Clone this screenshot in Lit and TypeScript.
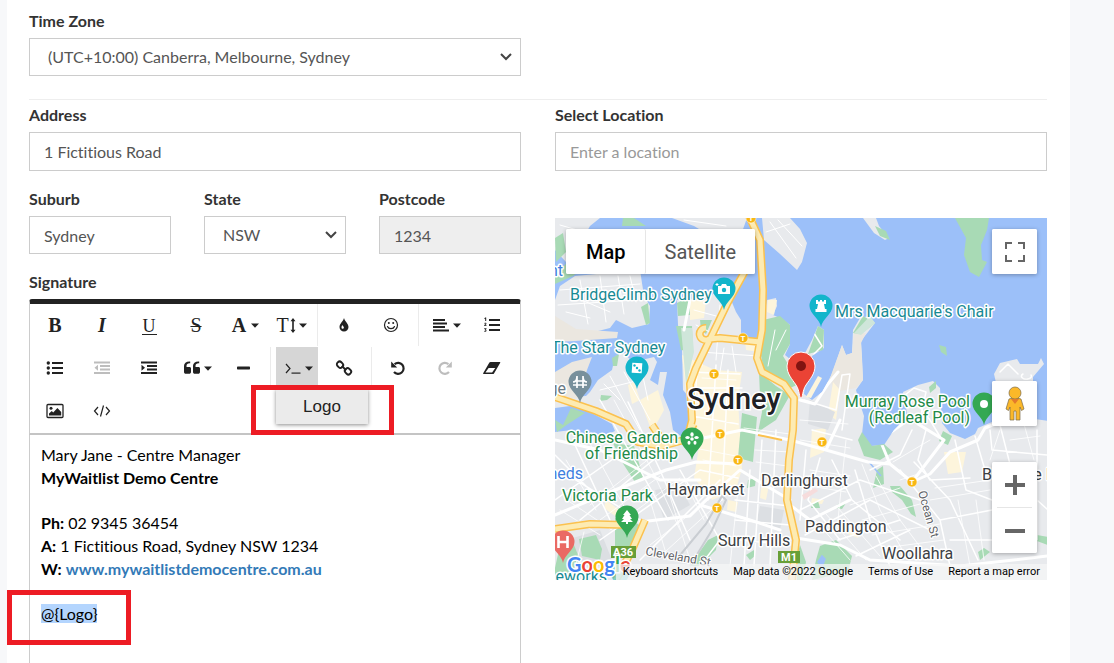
import { LitElement, html, svg, css, TemplateResult, SVGTemplateResult } from "lit";
import { customElement, property } from "lit/decorators.js";

const caret = html`<svg class="caret" width="8" height="5" viewBox="0 0 8 5" aria-hidden="true"><path d="M0 .5h8L4 4.800z" fill="currentColor"/></svg>`;

const icon = (body: SVGTemplateResult, w = 18) =>
  html`<svg class="ico" width=${w} height="18" viewBox="0 0 ${w} 18" fill="currentColor" aria-hidden="true">${body}</svg>`;

const icons: Record<string, TemplateResult> = {
  bold: html`<span class="glyph heavy">B</span>`,
  italic: html`<span class="glyph heavy slant">I</span>`,
  underline: html`<span class="glyph"><span class="under">U</span></span>`,
  strike: html`<span class="glyph struck">S</span>`,
  font: html`<span class="glyph heavy">A</span>`,
  size: html`<span class="glyph pair">T<svg width="6" height="15" viewBox="0 0 6 15" aria-hidden="true"><path d="M3 0l2.500 3.300H3.800v8.400h1.700L3 15 .5 11.700h1.700V3.300H.5z" fill="currentColor"/></svg></span>`,
  drop: icon(svg`<path d="M9 2C8.500 5 4.500 7.500 4.500 11a4.500 4.500 0 0 0 9 0C13.500 7.500 9.500 5 9 2z"/><path d="M6.500 11.200c0-.9.4-1.500.9-2.100.3 1 1.500 1.500 1.500 2.700a1.200 1.200 0 0 1-2.400-.6z" fill="#fff"/>`),
  smile: icon(svg`<circle cx="9" cy="9" r="6.500" fill="none" stroke="currentColor" stroke-width="1.200"/><circle cx="6.800" cy="7" r="1"/><circle cx="11.200" cy="7" r="1"/><path d="M5.500 10.500c1 2.800 6 2.800 7 0" fill="none" stroke="currentColor" stroke-width="1.200" stroke-linecap="round"/>`),
  align: icon(svg`<path d="M1 3h12v2H1zM1 6.500h14v2H1zM1 10h12v2H1zM1 13.500h16v2H1z"/>`),
  ordered: icon(svg`<path d="M6 3h11v2H6zM6 8h11v2H6zM6 13h11v2H6z"/><path d="M2.200 1.500h1V5h-1V2.800l-.8.200v-.8zM1.300 7.200c.8-.9 2.500-.4 2.100.7-.2.500-.9.900-1.200 1.400h1.300v.8H1.100c0-1.500 1.400-1.700 1.400-2.300 0-.4-.6-.3-.8.100zM1.200 12.300h2.300v.7l-.8.800c1.400.2 1 2-.4 2-.5 0-.9-.1-1.200-.4l.4-.7c.4.300 1.100.3 1.100-.1s-.5-.4-.9-.4v-.5l.6-.6H1.200z"/>`),
  bullets: icon(svg`<circle cx="2.300" cy="4" r="1.700"/><circle cx="2.300" cy="9" r="1.700"/><circle cx="2.300" cy="14" r="1.700"/><path d="M6 3h11v2H6zM6 8h11v2H6zM6 13h11v2H6z"/>`),
  outdent: icon(svg`<path d="M1 2.500h16v2H1zM7 6h10v2H7zM7 9.500h10v2H7zM1 13h16v2H1zM5 5.700v6L1.500 8.700z"/>`),
  indent: icon(svg`<path d="M1 2.500h16v2H1zM7 6h10v2H7zM7 9.500h10v2H7zM1 13h16v2H1zM1.500 5.700v6L5 8.700z"/>`),
  quote: icon(svg`<path d="M8 9.500v3.400c0 1-.8 1.800-1.800 1.800H2.800c-1 0-1.800-.8-1.800-1.800V7c0-2.700 2-4.500 5.600-4.500h.6v1.800h-.6C4.600 4.300 3.500 5.200 3.500 7v.5c0 .4.200.5.600.5h2.100C7.400 8 8 8.500 8 9.500zM17 9.500v3.400c0 1-.8 1.800-1.800 1.800h-3.400c-1 0-1.800-.8-1.800-1.800V7c0-2.700 2-4.500 5.600-4.500h.6v1.800h-.6c-2 0-3.100.9-3.100 2.700v.5c0 .4.200.5.600.5h2.100c1.200 0 1.800.5 1.800 1.500z"/>`),
  minus: icon(svg`<rect x="3" y="7.500" width="13" height="3" rx=".7"/>`),
  terminal: icon(svg`<path d="M2 5l4 4.500-4 4.500" fill="none" stroke="currentColor" stroke-width="1.200"/><path d="M7.500 13.500h9v1.200h-9z"/>`),
  link: icon(svg`<g fill="none" stroke="currentColor" stroke-width="1.900"><rect x="1.800" y="3" width="6.400" height="5.400" rx="2.400" transform="rotate(45 5 5.700)"/><rect x="9.800" y="9.600" width="6.400" height="5.400" rx="2.400" transform="rotate(45 13 12.300)"/><path d="M6.800 7l4.400 4.200"/></g>`),
  undo: icon(svg`<path d="M5.600 5.100A5.500 5.500 0 1 1 5 13" fill="none" stroke="currentColor" stroke-width="2.200"/><path d="M2.200 2.500v6h6z"/>`),
  redo: icon(svg`<path d="M12.400 5.100A5.500 5.500 0 1 0 13 13" fill="none" stroke="currentColor" stroke-width="2.200"/><path d="M15.800 2.500v6h-6z"/>`),
  eraser: icon(svg`<path d="M7.500 3h9c.8 0 1 .5.600 1.100L11 14.400c-.3.400-.6.600-1.100.6h-9c-.8 0-1-.5-.6-1.100L6.400 3.600c.3-.4.600-.6 1.100-.6zm-1.900 6L2.400 13.600h6.700L12.300 9z"/>`),
  image: icon(svg`<rect x="1" y="2.500" width="16" height="13" rx="1" fill="none" stroke="currentColor" stroke-width="1.300"/><circle cx="5" cy="6.200" r="1.500"/><path d="M3 13.500v-2L5.800 9l1.400 1.400L11.400 6l3.800 4v3.500z"/>`),
  code: icon(svg`<path d="M5 5L1.500 9 5 13M13 5l3.500 4-3.500 4M10.500 3.500l-3 11" fill="none" stroke="currentColor" stroke-width="1.200"/>`),
};

type Tool = { icon: string; label: string; menu?: boolean; off?: boolean; active?: boolean };
const t = (icon: string, label: string, extra: Partial<Tool> = {}): Tool => ({ icon, label, ...extra });

const toolRows: Tool[][][] = [
  [
    [t("bold", "Bold"), t("italic", "Italic"), t("underline", "Underline"), t("strike", "Strikethrough"), t("font", "Font family", { menu: true }), t("size", "Font size", { menu: true })],
    [t("drop", "Colors"), t("smile", "Emoticons")],
    [t("align", "Align", { menu: true }), t("ordered", "Ordered list")],
  ],
  [
    [t("bullets", "Unordered list"), t("outdent", "Decrease indent", { off: true }), t("indent", "Increase indent"), t("quote", "Quote", { menu: true }), t("minus", "Horizontal line")],
    [t("terminal", "Placeholders", { menu: true, active: true }), t("link", "Insert link")],
    [t("undo", "Undo"), t("redo", "Redo", { off: true }), t("eraser", "Clear formatting")],
  ],
  [[t("image", "Insert image"), t("code", "Code view")]],
];

@customElement("signature-editor")
export class SignatureEditor extends LitElement {
  static styles = css`
    :host { display: flex; flex-direction: column; color: #222; }
    .toolbar { border: 1px solid #ccc; border-top: 5px solid #222; border-bottom: 2px solid #c4c4c4; border-radius: 3px 3px 0 0; padding: 0 4px 1px; display: flex; flex-direction: column; gap: 1px; }
    .row { display: flex; gap: 5px; }
    .group { display: flex; gap: 5px; }
    .group + .group { border-left: 1px solid #ebebeb; margin-left: 1px; padding-left: 5px; }
    .slot { position: relative; }
    button { font: inherit; color: inherit; border: 0; background: none; padding: 0; cursor: pointer; }
    .tool { width: 42px; height: 42px; display: flex; align-items: center; justify-content: center; gap: 3px; }
    .tool.with-menu { padding-left: 3px; }
    .tool.active { background: #d6d6d6; }
    .tool.off { color: #bdbdbd; }
    .ico, .caret { flex: none; overflow: visible; }
    .glyph { font: 20px/20px "Liberation Serif", serif; min-width: 18px; text-align: center; }
    .heavy { font-weight: 700; }
    .slant { font-style: italic; }
    .struck { text-decoration: line-through 1px; }
    .under { display: inline-block; font-size: 18px; line-height: 15px; border-bottom: 1px solid #222; padding: 0 1px; }
    .pair { display: flex; align-items: center; gap: 1px; }
    .menu { position: absolute; z-index: 2; top: 42px; left: 0; width: 92px; height: 35px; background: #ebebeb; box-shadow: 0 1px 4px rgba(0, 0, 0, 0.45); font: 17px/34px "Liberation Sans", Arial, sans-serif; text-align: center; }
    .mark { position: absolute; z-index: 3; box-sizing: border-box; border: 5px solid #ed1c24; pointer-events: none; }
    .mark.menu-mark { top: 38px; left: -25px; width: 143px; height: 50px; }
    .mark.token-mark { top: -12px; left: -34px; width: 124px; height: 55px; }
    .body { flex: 1; border: solid #ccc; border-width: 0 1px; padding: 8px 11px 0; color: #000; line-height: 23px; outline: none; }
    .blank { height: 22px; }
    .line { position: relative; }
    .body a { color: #337ab7; text-decoration: none; font-weight: 700; }
    .token { background: #b4d5fe; }
  `;
  render() {
    return html`
      <div class="toolbar" role="toolbar" aria-label="Formatting">
        ${toolRows.map((row) => html`<div class="row">${row.map((group) => html`<div class="group">${group.map((tool) => html`
          <div class="slot">
            <button type="button" class="tool ${tool.menu ? "with-menu" : ""} ${tool.active ? "active" : ""} ${tool.off ? "off" : ""}" aria-label=${tool.label}>${icons[tool.icon]}${tool.menu ? caret : ""}</button>
            ${tool.active ? html`<button type="button" class="menu">Logo</button><div class="mark menu-mark"></div>` : ""}
          </div>`)}</div>`)}</div>`)}
      </div>
      <div class="body" role="textbox" aria-multiline="true" aria-label="Signature" contenteditable="true">
        <div class="line">Mary Jane - Centre Manager</div>
        <div class="line"><b>MyWaitlist Demo Centre</b></div>
        <div class="blank"></div>
        <div class="line"><b>Ph:</b> 02 9345 36454</div>
        <div class="line"><b>A:</b> 1 Fictitious Road, Sydney NSW 1234</div>
        <div class="line"><b>W:</b> <a href="#site">www.mywaitlistdemocentre.com.au</a></div>
        <div class="blank"></div>
        <div class="line"><span class="token">@{Logo}</span><div class="mark token-mark"></div></div>
      </div>`;
  }
}

const landShapes = [
  "M555 218H600L590 226 582 240 566 262 555 250Z",
  "M555 300L560 286 575 276 640 270 644 296 650 306 649 324 632 328 616 320 610 328 598 331 555 333Z",
  "M672 218H747L742 232H704L694 226Z",
  "M762 218H790L800 229 807 243 802 262 797 270 780 254 764 240Z",
  "M863 218H876L879 226 889 238 885 240 874 233Z",
  "M994 374L1000 363 1017 359 1020 364 1038 364 1041 358 1044 364 1033 377 1033 400H1000Z",
  "M555 398L586 396 590 392 598 380 612 370 615 357 622 352 633 362 654 357 657 362 650 380 658 385 660 372 667 372 663 395 670 412 673 430 682 437 688 428 688 396 683 390 682 350 678 325 677 300 689 297 697 305 722 288 731 300 736 312 741 320 741 338 760 338 763 320 767 300 776 298 777 306 773 315 782 319 790 325 790 344 785 355 796 364 805 353 812 340 818 326 824 330 824 348 812 356 806 374 804 394 812 400 822 392 832 374 842 345 846 355 852 353 853 330 860 318 869 316 875 323 861 341 862 357 863 380 856 390 860 404 864 416 862 434 871 446 884 445 894 430 900 424 908 418 903 392 918 385 933 381 940 388 942 423 950 433 965 439 975 434 978 428 992 422 1014 416 1048 421V580H555Z",
];

const parkShapes = [
  "M555 238L563 233 566 252 556 262Z", "M623 218H634L646 226H622Z", "M568 262H590L573 276 555 284V274Z",
  "M641 307L648 303 650 323 646 325Z", "M677 303L689 297 690 315 678 316Z", "M676 326L692 326 693 352 681 350Z",
  "M700 320H712L706 334 701 330Z", "M955 218H989L987 230 981 245 982 260 987 262 979 277 970 272 964 255 966 238Z",
  "M875 226L886 231 890 240 880 236Z", "M763 320L780 316 790 325 790 344 783 356 793 372 797 385 790 388 764 371 760 350Z",
  "M759 372L776 386 790 395 776 420 758 432 762 412 760 396Z", "M742 413L757 417 753 462 738 458Z",
  "M818 326L824 330 823 350 808 354Z", "M853 333L863 316 875 323 861 334Z", "M939 345L946 347 947 356 941 352Z",
  "M929 387L936 381 936 388 930 393Z", "M862 432L872 446 884 444 893 452 880 460 864 456 858 440Z",
  "M877 470L883 466 884 484 873 488Z", "M943 431L952 436 948 445 939 441Z", "M890 486L900 486 912 500 916 517 911 514 902 500 892 492Z",
  "M555 424L562 418 570 408 582 412 567 425 556 430Z", "M613 443L634 446 643 477 635 482 622 462Z",
  "M555 568L560 545 572 540 580 560 566 580H555Z", "M579 539L596 535 602 549 600 560 582 556Z",
  "M615 518L632 520 642 527 632 556 615 556Z", "M694 560L708 540 718 535 716 550 700 566 690 566Z",
  "M748 480L756 478 755 486 747 488Z", "M746 555L754 550 755 556 750 560Z", "M797 556L800 545 806 562 803 580 797 580Z",
  "M820 546L836 540 852 556 848 572 812 580 816 560Z", "M811 508H820L818 501 812 505Z", "M838 504L846 503 842 509 836 508Z",
  "M978 552L984 548 990 552 980 560Z", "M1037 535L1048 537V545L1037 541Z", "M612 358L619 354 617 366 613 366Z", "M601 395L612 396 607 400 600 401Z",
];

const sandShapes = [
  "M555 316L576 329 618 332 617 338 575 341 555 342Z", "M555 372L572 362 592 357 587 370 578 398 555 400Z",
  "M842 345L846 355 852 353 854 333H866L861 343 863 380 856 388 834 392 830 378Z",
];

const creamShapes = [
  "M682 355L715 370 742 372 738 400 742 468 736 490 712 500 694 478 700 440 690 430Z",
  "M690 300H706L704 318 690 320Z", "M640 400L658 390 664 410 652 432Z", "M768 300L777 300 774 315 767 312Z",
  "M944 452H966L962 472 948 474Z", "M812 430L826 428 824 452 810 458Z", "M822 378L818 376 806 397 811 398Z",
  "M628 385L634 382 640 400 632 404Z", "M745 340L760 342 759 352 746 350Z", "M833 382L840 390 836 420 828 414Z",
  "M762 480H770L766 500 760 498Z", "M728 500L738 502 736 512 727 510Z", "M606 500L622 512 618 518 604 508Z",
  "M812 498L824 500 822 504 811 503Z", "M850 528L860 532 858 538 848 534Z",
];

const minorRoads = `M690 372L740 374M690 388L742 388M692 416L738 424M700 470L738 478M698 360L692 440M716 365L708 500M728 370L722 500
M600 400L640 470 668 520M628 402L660 470 690 540M575 445L610 520M560 470L640 520M555 455L600 500M555 500L640 440M580 520L690 430
M600 540L700 470M640 560L720 480M680 470L720 540 700 566M750 470L744 566M762 440L754 566M776 430L770 566M735 500L790 506M735 520L790 525M740 540L790 545
M804 400L836 410 842 375 850 374 842 430M812 430L852 440M806 450L800 520M820 458L808 500 840 540M832 460L852 500 900 540M855 470L870 520 890 566
M800 510L860 480 920 500M805 535L870 500 930 530M900 470L940 520 950 566M914 462L950 500 978 560M926 430L918 460 930 480 970 478M942 440L930 420 918 405
M955 440L966 490 992 500M975 436L985 470M990 430L992 450 1048 455M1000 425L1014 480M1037 430L1037 540M940 520L992 510M950 540L992 540M905 395L914 388 926 392 920 420
M838 540L900 520M856 556L910 530M870 470L900 455 912 430M1037 500L1048 510M1000 372L1008 364 1018 374M1023 374a5 3 0 1 0 8 1M812 330L822 346 814 354`;

const laneRoads = `M614 400L652 470 680 530M588 440L626 510M566 460L596 510M590 505L650 458M600 520L660 476M610 530L680 478M650 545L716 494M665 552L722 500
M650 500L668 560M668 490L690 560M684 480L704 520M738 490L730 566M744 428L790 434M755 450L790 452M756 462L788 466M800 420L848 424M800 440L850 448
M846 440L838 520M862 464L880 510 908 560M876 476L900 520 930 560M810 470L850 476M804 485L846 492M815 520L850 560M826 514L866 560M838 508L880 556
M850 505L900 488M862 520L920 504M872 535L940 524M884 548L944 540M930 500L990 490M935 488L990 480M958 500L970 566M1000 430L990 460M976 500L984 560
M893 462L930 440M900 480L918 474M560 510L600 535M570 502L612 530M584 532L572 580M1024 424L1034 460M1010 440L1040 436M702 378L736 380M694 402L740 406M694 448L736 456M703 460L736 466`;

const faintRoads = `M560 290L640 284M558 305L636 300M580 280L588 324M600 276L606 322M618 276L624 314M566 378L584 364M600 390L640 380M610 376L640 430M624 372L650 420
M694 310L716 316M696 325L714 334M720 305L716 360M770 222L796 258M778 220L802 246M766 232L790 224M684 220L726 226M560 225L584 232M775 330L768 366M786 330L776 350
M566 312L590 318M572 296L610 312M630 276L636 302M704 340L702 366M724 348L720 372M732 346L736 372M700 352L758 356M642 372L648 400M604 384L620 400`;

const majorRoads = `M555 515L610 492 666 470 696 462 740 464M694 440L742 430 790 440 826 450 868 462 890 464 912 482 930 474 950 452 978 440 985 428 1000 422
M640 522L690 516 706 500 740 470 790 500M790 505L810 520 850 500M796 538L840 545 870 560 960 566 1048 556M912 482L944 440 918 424M890 464L880 440 908 420
M700 505L750 520 780 530M826 450L840 420M555 440L600 450 660 480 700 480M684 330L690 300M800 400L815 404 828 384 838 372`;

const expressways = `M748 214L760 240 763 290 762 330 757 358 762 372 784 384 794 398 793 430 789 460 787 500 796 540 792 580
M750 262L728 302 712 335 696 368 690 384 692 420 688 436M706 328a6 6 0 1 0 3 11L720 338 760 342M555 397L596 411 626 424 638 442 662 446 684 440 694 424
M555 529L590 524 626 525M645 520L632 550 616 580M652 425L662 440`;

const pin = (x: number, y: number, fill: string, mark: SVGTemplateResult) => svg`
  <g transform="translate(${x} ${y})"><path d="M0 21C-1 13-11.500 8-11.500 0a11.500 11.500 0 0 1 23 0C11.500 8 1 13 0 21z" fill=${fill}/>${mark}</g>`;

const stations = [[743, 338], [714, 374], [720, 434], [738, 460], [717, 508], [822, 442], [912, 482], [751, 218]];

@customElement("location-map")
export class LocationMap extends LitElement {
  static styles = css`
    :host { display: block; position: relative; height: 362px; overflow: hidden; font-family: Roboto, Arial, sans-serif; background: #9cc0f9; }
    .canvas { display: block; width: 100%; height: 100%; }
    .label { font-size: 16px; paint-order: stroke; stroke: #fff; stroke-width: 3px; stroke-linejoin: round; }
    .teal { fill: #178a94; }
    .green { fill: #238a48; }
    .place { fill: #3c4043; }
    .blue { fill: #3f7fe0; }
    .grey { fill: #6b7b84; }
    .end { text-anchor: end; }
    .city { font-size: 29px; font-weight: 500; fill: #202124; paint-order: stroke; stroke: #fff; stroke-width: 3px; }
    .road { font-size: 12px; fill: #5f6368; paint-order: stroke; stroke: #fff; stroke-width: 2px; }
    .shield { font-size: 11px; font-weight: 700; fill: #fff; text-anchor: middle; }
    .station { font-size: 8px; font-weight: 700; fill: #fff; text-anchor: middle; }
    .brand { font: 700 20px Lato, sans-serif; paint-order: stroke; stroke: #fff; stroke-width: 3px; }
    button { font: inherit; border: 0; background: #fff; padding: 0; color: #666; cursor: pointer; display: grid; place-items: center; }
    .types, .full, .person, .zoom { position: absolute; border-radius: 2px; box-shadow: 0 1px 4px rgba(0, 0, 0, 0.3); background: #fff; }
    .types { top: 11px; left: 11px; display: flex; font-size: 20px; }
    .types button { height: 45px; padding: 0 19px; color: #565656; border-radius: 2px; }
    .types button[aria-pressed="true"] { color: #000; font-weight: 500; border-right: 1px solid #e6e6e6; padding-left: 20px; }
    .full { top: 11px; right: 10px; }
    .person { top: 163px; right: 10px; }
    .square { width: 45px; height: 45px; border-radius: 2px; }
    .zoom { top: 244px; right: 10px; }
    .divider { height: 1px; margin: 0 5px; background: #e6e6e6; }
    .credits { position: absolute; right: 0; bottom: 0; display: flex; gap: 1px; font-size: 11px; line-height: 16px; color: #000; background: rgba(245, 245, 245, 0.75); }
    .credits > * { padding: 0 7px; font-size: 11px; line-height: 16px; color: #000; background: none; text-decoration: none; white-space: nowrap; }
  `;
  render() {
    return html`
      <svg class="canvas" viewBox="555 218 492 362" preserveAspectRatio="xMidYMid slice" role="img" aria-label="Map of Sydney">
        <defs><clipPath id="land">${landShapes.map((d) => svg`<path d=${d}/>`)}</clipPath></defs>
        <g fill="#e8eaed">${landShapes.map((d) => svg`<path d=${d}/>`)}</g>
        <g fill="#ebe7e0">${sandShapes.map((d) => svg`<path d=${d}/>`)}</g>
        <g fill="#fdf5dc">${creamShapes.map((d) => svg`<path d=${d}/>`)}</g>
        <g fill="#dcdfe3"><path d="M655 490L680 486 690 505 664 520Z"/><path d="M760 506L784 510 780 530 756 524Z"/><path d="M566 540L600 530 612 560 590 570Z"/><path d="M810 400L835 412 828 430 808 424Z"/></g>
        <g fill="#a8dab5">${parkShapes.map((d) => svg`<path d=${d}/>`)}</g>
        <g fill="#cfe6da"><path d="M681 328L692 328 694 352 686 385 683 350Z"/><path d="M854 333L870 316 875 323 861 335Z"/></g>
        <path d="M555 408L570 406 590 412 612 424 615 431 604 436 582 438 572 430 555 432Z" fill="#9cc0f9"/>
        <path d="M555 420L563 425 571 408 585 413 568 424 557 432Z" fill="#a8dab5"/>
        <path d="M869 462L881 476M818 562l4-6 3 3-3 8z" stroke="#9cc0f9" stroke-width="1.500" fill="#9cc0f9"/>
        <g fill="none" stroke="#fff" stroke-linecap="round" stroke-linejoin="round" clip-path="url(#land)">
          <path d=${minorRoads} stroke-width="1.500"/><path d=${laneRoads} stroke-width="1" opacity=".8"/><path d=${faintRoads} stroke-width="1"/><path d=${majorRoads} stroke-width="3"/>
        </g>
        <path d="M676 560L706 524 722 496 726 500 712 530 690 566" fill="none" stroke="#c9cdd2" stroke-width="2"/>
        <path d="M802 495L815 488 818 491 804 500Z" fill="#f6dcdc"/>
        <g fill="none" stroke-linejoin="round"><path d=${expressways} stroke="#fbc14e" stroke-width="8"/><path d=${expressways} stroke="#fdebb2" stroke-width="5"/></g>
        <path d="M758 435L782 440" stroke="#fbc14e" stroke-width="2"/>
        ${stations.map(([x, y]) => svg`<circle cx=${x} cy=${y} r="5" fill="#f9b714" stroke="#fff" stroke-width=".5"/><text class="station" x=${x} y=${y + 3}>T</text>`)}
        ${pin(724, 289, "#12b5cb", svg`<path d="M-6-3h3l1-2h4l1 2h3v8H-6z" fill="#fff"/><circle cy="1" r="2.200" fill="#12b5cb"/><path d="M-7-6v3M-8.500-4.500h3" stroke="#fff"/>`)}
        ${pin(637, 368, "#12b5cb", svg`<rect x="-5" y="-5" width="10" height="10" fill="#fff" transform="rotate(4)"/><circle cx="-2.500" cy="-2.500" r="1.200" fill="#12b5cb"/><circle r="1.200" fill="#12b5cb"/><circle cx="2.500" cy="2.500" r="1.200" fill="#12b5cb"/>`)}
        ${pin(821, 306, "#12b5cb", svg`<path d="M-5-6h2v1.500h2V-6h2v1.500h2V-6h2v4H3L4 3h1.500v3h-11V3H-4l1-5h-2z" fill="#fff"/>`)}
        ${pin(580, 382, "#78909c", svg`<path d="M-7 3h14M-7 0c3 0 4-2 4-6M7 0C4 0 3-2 3-6M-3-6V6M3-6V6M-3-1h6" stroke="#fff" stroke-width="1.700" fill="none"/>`)}
        ${pin(692, 439, "#34a853", svg`<g fill="#fff"><circle r="1.800"/><ellipse cy="-4.500" rx="1.700" ry="2.200"/><ellipse cx="-4.500" cy="-1.500" rx="2.200" ry="1.500"/><ellipse cx="4.500" cy="-1.500" rx="2.200" ry="1.500"/><ellipse cx="-3" cy="3.800" rx="1.500" ry="2"/><ellipse cx="3" cy="3.800" rx="1.500" ry="2"/></g>`)}
        ${pin(627, 517, "#34a853", svg`<path d="M0-7L4-2H2.500L5 2H3l3 3H1v2h-2V5h-5l3-3h-2l2.500-4H-4z" fill="#fff"/>`)}
        ${pin(984, 404, "#34a853", svg`<circle r="4" fill="#fff"/>`)}
        ${pin(563, 542, "#ea6a64", svg`<path d="M-4.500-6v12M4.500-6v12M-4.500 0h9" stroke="#fff" stroke-width="2.600"/>`)}
        <text class="label blue end" x="563" y="276">nt</text>
        <text class="label teal" x="570" y="300">BridgeClimb Sydney</text>
        <text class="label teal" x="835" y="317">Mrs Macquarie's Chair</text>
        <text class="label teal" x="551" y="353">The Star Sydney</text>
        <text class="label grey end" x="566" y="394">ge</text>
        <text class="label green end" x="678" y="443">Chinese Garden</text>
        <text class="label green end" x="678" y="459">of Friendship</text>
        <text class="label blue end" x="583" y="479">heds</text>
        <text class="label green" x="562" y="501">Victoria Park</text>
        <text class="label green end" x="970" y="407">Murray Rose Pool</text>
        <text class="label green end" x="970" y="423">(Redleaf Pool)</text>
        <text class="label place" x="667" y="495">Haymarket</text>
        <text class="label place" x="761" y="486">Darlinghurst</text>
        <text class="label place" x="718" y="546">Surry Hills</text>
        <text class="label place" x="805" y="532">Paddington</text>
        <text class="label place" x="882" y="559">Woollahra</text>
        <text class="label place" x="982" y="480">Bellevue Hill</text>
        <text class="label teal end" x="607" y="582">eworks</text>
        <text class="city" x="687" y="409">Sydney</text>
        <text class="road" transform="translate(645 555) rotate(10)">Cleveland St</text>
        <text class="road" transform="translate(918 492) rotate(74)">Ocean St</text>
        <rect x="611" y="546" width="25" height="12" fill="#689f38"/><text class="shield" x="623" y="556">A36</text>
        <rect x="778" y="551" width="22" height="12" fill="#689f38"/><text class="shield" x="789" y="561">M1</text>
        <circle cx="620" cy="574" r="9" fill="#12b5cb" opacity=".5"/>
        <text class="brand" x="567" y="572"><tspan fill="#4285f4">G</tspan><tspan fill="#ea4335">o</tspan><tspan fill="#fbbc04">o</tspan><tspan fill="#4285f4">g</tspan><tspan fill="#34a853">l</tspan><tspan fill="#ea4335">e</tspan></text>
        <path d="M801 398C799 398 800 391 796 385 792 379 787 374 787 366a14 14 0 0 1 28 0C815 374 810 379 806 385 802 391 803 398 801 398z" fill="#ea4335" stroke="#fff"/>
        <circle cx="801" cy="366" r="5" fill="#811411"/>
      </svg>
      <div class="types"><button type="button" aria-pressed="true">Map</button><button type="button" aria-pressed="false">Satellite</button></div>
      <div class="full"><button type="button" class="square" aria-label="Toggle fullscreen view"><svg width="20" height="20" viewBox="0 0 20 20"><path d="M1 7V1H7M13 1h6V7M19 13v6H13M7 19H1V13" fill="none" stroke="#666" stroke-width="2"/></svg></button></div>
      <div class="person"><button type="button" class="square" aria-label="Street View"><svg width="22" height="36" viewBox="0 0 22 36"><g fill="#fbb829" stroke="#7a6a4a" stroke-width=".7"><path d="M5 13Q11 10 17 13L20 23 17.500 24.500 16 21V34H12V25H10V34H6V21L4.500 24.500 2 23Z"/><circle cx="11" cy="7" r="6"/></g><path d="M7 13h8l-4 5z" fill="#e37b2c"/></svg></button></div>
      <div class="zoom">
        <button type="button" class="square" aria-label="Zoom in"><svg width="20" height="20" viewBox="0 0 20 20"><path d="M0 8h8V0h4v8h8v4h-8v8H8v-8H0z" fill="#666"/></svg></button>
        <div class="divider"></div>
        <button type="button" class="square" aria-label="Zoom out"><svg width="20" height="20" viewBox="0 0 20 20"><path d="M0 8h20v4H0z" fill="#666"/></svg></button>
      </div>
      <div class="credits"><button type="button">Keyboard shortcuts</button><span>Map data ©2022 Google</span><a href="#terms">Terms of Use</a><a href="#report">Report a map error</a></div>`;
  }
}

const chevron = html`<svg class="chevron" width="12" height="8" viewBox="0 0 12 8" aria-hidden="true"><path d="M1 1l5 5 5-5" fill="none" stroke="#444" stroke-width="2"/></svg>`;

@customElement("app-root")
export class AppRoot extends LitElement {
  @property() region = "NSW";

  static styles = css`
    :host { display: flex; flex-direction: column; min-height: 100vh; background: #f7f8fa; font: 16px/22px Lato, sans-serif; font-variant-ligatures: none; }
    .panel { flex: 1; margin: 0 44px 0 7px; padding: 10px 23px 0 22px; background: #fff; display: flex; flex-direction: column; box-sizing: border-box; }
    .columns { display: grid; grid-template-columns: 1fr 1fr; gap: 34px; }
    .columns.main { flex: 1; }
    .rule { width: 100%; border: 0; border-top: 1px solid #eee; margin: 23px 0 4px; }
    .column { display: flex; flex-direction: column; gap: 17px; min-width: 0; }
    .field { display: flex; flex-direction: column; gap: 6px; min-width: 0; }
    .caption { color: #333; font-weight: 700; }
    .trio { display: grid; grid-template-columns: repeat(3, 1fr); gap: 33px; }
    .box { position: relative; display: flex; align-items: center; }
    input, select { appearance: none; box-sizing: border-box; width: 100%; height: 38px; border: 1px solid #ccc; border-radius: 0; background: #fff; color: #555; font: inherit; font-variant-ligatures: none; padding: 0 14px; margin: 0; }
    input.tall { height: 39px; }
    select { padding: 0 30px 0 18px; }
    input:disabled { background: #eee; color: #555; }
    input::placeholder { color: #999; opacity: 1; }
    .chevron { position: absolute; right: 9px; pointer-events: none; }
    .grow { flex: 1; }
    signature-editor { flex: 1; }
    .place { gap: 47px; }
  `;
  render() {
    return html`
      <main class="panel">
        <div class="columns">
          <div class="field">
            <label class="caption" for="zone">Time Zone</label>
            <div class="box"><select id="zone"><option>(UTC+10:00) Canberra, Melbourne, Sydney</option></select>${chevron}</div>
          </div>
        </div>
        <hr class="rule" />
        <div class="columns main">
          <div class="column">
            <div class="field">
              <label class="caption" for="address">Address</label>
              <input id="address" class="tall" value="1 Fictitious Road" />
            </div>
            <div class="trio">
              <div class="field"><label class="caption" for="suburb">Suburb</label><input id="suburb" value="Sydney" /></div>
              <div class="field"><label class="caption" for="state">State</label><div class="box"><select id="state"><option>${this.region}</option></select>${chevron}</div></div>
              <div class="field"><label class="caption" for="postcode">Postcode</label><input id="postcode" value="1234" disabled /></div>
            </div>
            <div class="field grow">
              <span class="caption">Signature</span>
              <signature-editor></signature-editor>
            </div>
          </div>
          <div class="column place">
            <div class="field">
              <label class="caption" for="location">Select Location</label>
              <input id="location" class="tall" placeholder="Enter a location" />
            </div>
            <location-map></location-map>
          </div>
        </div>
      </main>`;
  }
}
